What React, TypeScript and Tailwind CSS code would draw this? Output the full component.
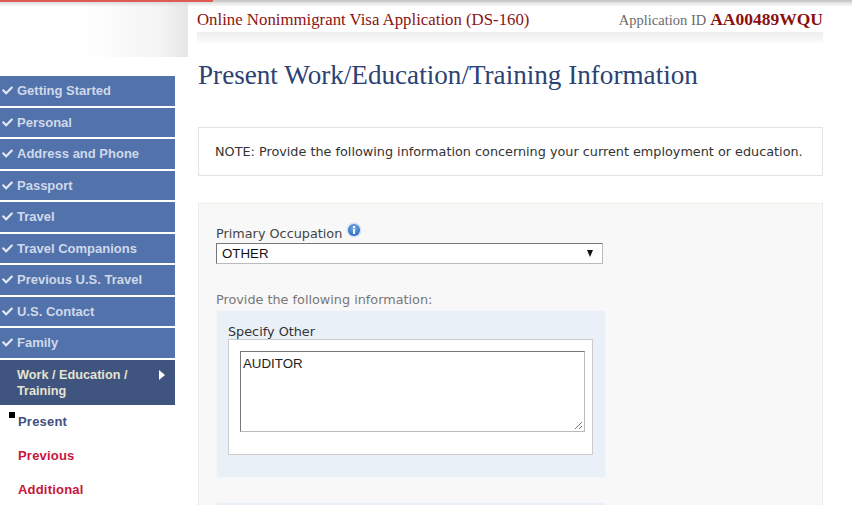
import { FaCheck } from 'react-icons/fa'

const steps = [
  'Getting Started',
  'Personal',
  'Address and Phone',
  'Passport',
  'Travel',
  'Travel Companions',
  'Previous U.S. Travel',
  'U.S. Contact',
  'Family',
]

function InfoIcon() {
  return (
    <svg width="16" height="16" viewBox="0 0 16 16" className="mb-[5px]">
      <defs>
        <radialGradient id="info" cx="50%" cy="35%" r="65%">
          <stop offset="0%" stopColor="#7fb0ea" />
          <stop offset="100%" stopColor="#2a66bb" />
        </radialGradient>
      </defs>
      <circle cx="8" cy="8" r="7.5" fill="#d3e2f4" />
      <circle cx="8" cy="8" r="6" fill="url(#info)" />
      <rect x="7" y="7" width="2" height="5" fill="#ffffff" />
      <rect x="7" y="4" width="2" height="2" fill="#ffffff" />
    </svg>
  )
}

function Sidebar() {
  return (
    <div className="w-[175px] mt-[19px] font-['Liberation_Sans',sans-serif] font-bold text-[13px]">
      {steps.map((s) => (
        <div key={s} className="h-[29.5px] mb-[2px] bg-[#5272ac] text-[#cfd9e9] flex items-center">
          <FaCheck className="w-[11px] h-[11px] ml-[2px] mr-[4px] text-[#e3e8f1]" />
          <span>{s}</span>
        </div>
      ))}
      <div className="h-[45px] bg-[#3f547f] text-[#e6e4cf] flex justify-between pl-[17px] pr-[10px] pt-[7px] leading-[16px] text-[12.7px]">
        <span className="w-[125px]">Work / Education / Training</span>
        <svg width="6" height="10" viewBox="0 0 6 10" className="mt-[3px]">
          <path d="M0 0 L6 5 L0 10 Z" fill="#ffffff" />
        </svg>
      </div>
      <div className="relative pl-[18px] pt-[9px] leading-[16px] tracking-[0.2px]">
        <div className="absolute left-[9px] top-[7px] w-[6px] h-[6px] bg-black" />
        <div className="text-[#3f4f80] h-[34px]">Present</div>
        <div className="text-[#c8143c] h-[34px]">Previous</div>
        <div className="text-[#c8143c]">Additional</div>
      </div>
    </div>
  )
}

function Header() {
  return (
    <div className="font-['Liberation_Serif',serif]">
      <div className="h-[32px] pl-[9px] pr-[29px] flex items-center justify-between">
        <span className="text-[#8a1414] text-[16.8px] mt-[7px]">Online Nonimmigrant Visa Application (DS-160)</span>
        <span className="mt-[7px] flex items-baseline gap-[4px]">
          <span className="text-[#6b6b6b] text-[14.5px]">Application ID</span>
          <span className="text-[#8a0f0f] text-[17.5px] font-bold">AA00489WQU</span>
        </span>
      </div>
      <div className="h-[11px] ml-[9px] mr-[29px] bg-gradient-to-b from-[#eeeeee] to-[#fbfbfb]" />
    </div>
  )
}

export default function App() {
  return (
    <div className="w-[852px] h-[505px] overflow-hidden bg-white relative flex">
      <div className="absolute left-0 top-0 w-full h-[2px] bg-gradient-to-r from-[#e05a55] from-[25%] to-[#c9c9c9] to-[25%]" />
      <div className="absolute left-0 top-[2px] w-full h-[5px] bg-gradient-to-b from-[#dddddd] to-transparent" />
      <div className="w-[188px] shrink-0">
        <div className="h-[57px] bg-gradient-to-r from-white from-[45%] via-[#f4f4f4] via-[85%] to-[#e6e6e6]" />
        <Sidebar />
      </div>
      <div className="flex-1 min-w-0">
        <Header />
        <div className="pl-[10px] pr-[29px]">
          <h1 className="font-['Liberation_Serif',serif] text-[#2b4272] text-[27.15px] leading-[32px] mt-[16px] whitespace-nowrap">
            Present Work/Education/Training Information
          </h1>
          <div className="mt-[36px] h-[49px] border border-[#e3e3e3] flex items-center pl-[16px] font-['DejaVu_Sans',sans-serif] text-[12.8px] text-[#333333] whitespace-nowrap">
            NOTE: Provide the following information concerning your current employment or education.
          </div>
          <div className="mt-[27px] h-[320px] bg-[#f8f8f8] border border-dotted border-[#e6e2d8] pl-[17px] pt-[18px] font-['DejaVu_Sans',sans-serif] text-[12.8px] text-[#444444]">
            <div className="flex items-center h-[21px] gap-[4px]">
              <span className="mt-[3px]">Primary Occupation</span>
              <InfoIcon />
            </div>
            <div className="w-[387px] h-[21px] bg-white border border-[#777777] border-r-[#bbbbbb] border-b-[#bbbbbb] flex items-center justify-between pl-[5px] pr-[9px] font-['Liberation_Sans',sans-serif] text-[13.3px] text-[#111111]">
              <span>OTHER</span>
              <span className="w-0 h-0 border-x-[3.5px] border-x-transparent border-t-[7px] border-t-[#111111]" />
            </div>
            <div className="mt-[26px] text-[#777777]">Provide the following information:</div>
            <div className="mt-[1px] w-[390px] h-[168px] bg-[#e9f0f8] border border-[#f4f6f9] pl-[11px] pt-[14px]">
              <div className="text-[#333333] leading-[14px]">Specify Other</div>
              <div className="w-[365px] h-[116px] bg-white border border-[#cccccc] pl-[11px] pt-[11px]">
                <div className="relative w-[345px] h-[81px] border border-[#777777] border-r-[#bbbbbb] border-b-[#bbbbbb] pl-[2px] pt-[4px] font-['Liberation_Sans',sans-serif] text-[13.3px] leading-[16px] text-[#222222]">
                  AUDITOR
                  <svg width="9" height="9" viewBox="0 0 9 9" className="absolute right-[1px] bottom-[1px]">
                    <path d="M1 8 L8 1 M5 8 L8 5" stroke="#777777" strokeWidth="1" />
                  </svg>
                </div>
              </div>
            </div>
            <div className="mt-[24px] w-[390px] h-[20px] bg-[#e9f0f8] border border-[#f4f6f9]" />
          </div>
        </div>
      </div>
    </div>
  )
}
